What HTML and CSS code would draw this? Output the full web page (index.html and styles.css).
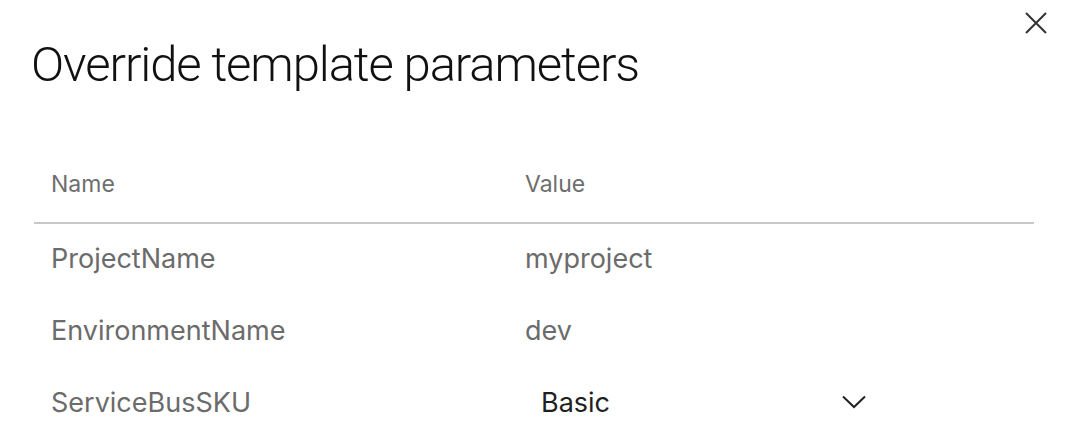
FILE: index.html
```html
<!DOCTYPE html>
<html>
<head>
<meta charset="utf-8">
<link rel="stylesheet" href="styles.css">
</head>
<body>
<div class="dialog">
  <button class="close" aria-label="Close">
    <svg width="24" height="24" viewBox="0 0 24 24"><path d="M2 2 L22 22 M22 2 L2 22" stroke="#333" stroke-width="2" fill="none"/></svg>
  </button>
  <h1 class="title">Override template parameters</h1>
  <div class="table">
    <div class="row head">
      <div class="cell name">Name</div>
      <div class="cell value">Value</div>
    </div>
    <div class="row">
      <div class="cell name">ProjectName</div>
      <div class="cell value">myproject</div>
    </div>
    <div class="row">
      <div class="cell name">EnvironmentName</div>
      <div class="cell value">dev</div>
    </div>
    <div class="row">
      <div class="cell name">ServiceBusSKU</div>
      <div class="cell value">
        <div class="select">
          <span class="sel-text">Basic</span>
          <svg class="chev" width="24" height="14" viewBox="0 0 24 14"><path d="M1 1.5 L12 12 L23 1.5" stroke="#222" stroke-width="2" fill="none"/></svg>
        </div>
      </div>
    </div>
  </div>
</div>
</body>
</html>
```
FILE: styles.css
```css
html, body {
  margin: 0;
  padding: 0;
  background: #fff;
}
body {
  font-family: Inter, "Noto Sans", sans-serif;
  width: 1076px;
  height: 444px;
  overflow: hidden;
}
.dialog {
  position: relative;
  padding: 33px 42px 0 34px;
}
.close {
  position: absolute;
  top: 11px;
  right: 28px;
  background: none;
  border: 0;
  padding: 0;
  width: 24px;
  height: 24px;
  cursor: pointer;
}
.title {
  margin: 0 0 0 -3px;
  font-family: Roboto, "Noto Sans", sans-serif;
  font-weight: 300;
  font-size: 49px;
  line-height: 64px;
  letter-spacing: -1.1px;
  color: #111;
}
.table {
  margin-top: 73px;
}
.row {
  display: flex;
  box-sizing: border-box;
  height: 72px;
  padding-bottom: 4px;
  align-items: center;
}
.row.head {
  height: 54px;
  padding-bottom: 0;
  align-items: flex-start;
  border-bottom: 2px solid #c8c8c8;
}
.cell {
  font-size: 27px;
  color: #6b6b6b;
}
.head .cell {
  font-size: 23px;
  color: #6e6e6e;
}
.name {
  width: 474px;
  padding-left: 17px;
}
.value {
  flex: 1;
}
.select {
  display: flex;
  align-items: center;
  width: 325px;
  padding-left: 16px;
  justify-content: space-between;
  color: #1f1f1f;
}
```
